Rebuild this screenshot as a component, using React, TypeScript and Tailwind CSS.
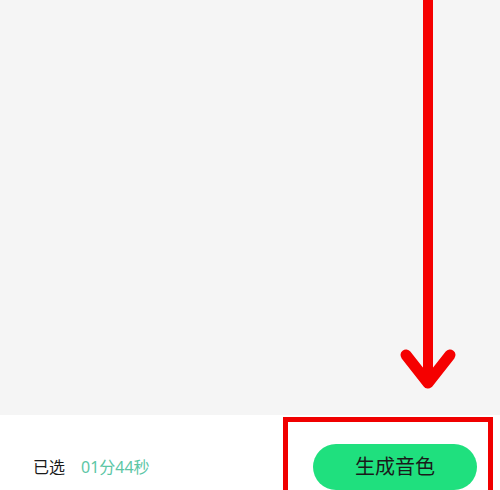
const FONT = "font-['Noto_Sans','Noto_Sans_CJK_SC',sans-serif]";

// Annotation arrow pointing down at the button
const DownArrow = () => (
  <svg
    className="pointer-events-none absolute left-0 top-0"
    width={500}
    height={400}
    viewBox="0 0 500 400"
  >
    <line x1={428} y1={-5} x2={428} y2={378} stroke="#f50000" strokeWidth={10} />
    <polyline
      points="406,355 428,383 450,355"
      fill="none"
      stroke="#f50000"
      strokeWidth={11}
      strokeLinecap="round"
      strokeLinejoin="round"
    />
  </svg>
);

export default function App() {
  return (
    <div className={`relative h-[490px] w-[500px] overflow-hidden bg-[#f5f5f5] ${FONT}`}>
      <div className="h-[415px] w-full bg-[#f5f5f5]" />
      <div className="flex h-[75px] w-full items-start bg-white pt-[29px]">
        <div className="flex h-[46px] w-full items-center justify-between pl-[33px] pr-[23px]">
          <div className="flex items-center text-[16px] leading-none">
            <span className="text-[#1a1a1a]">已选</span>
            <span className="ml-[16px] text-[#5cc6a5]">01分44秒</span>
          </div>
          <button className="flex h-[46px] w-[164px] items-center justify-center rounded-full bg-[#1fe07e] text-[20px] leading-none text-[#1a1a1a]">
            生成音色
          </button>
        </div>
      </div>
      {/* red highlight box, runs past the bottom edge */}
      <div className="pointer-events-none absolute left-[283px] top-[417px] h-[90px] w-[210px] border-[5px] border-[#f00000]" />
      <DownArrow />
    </div>
  );
}
